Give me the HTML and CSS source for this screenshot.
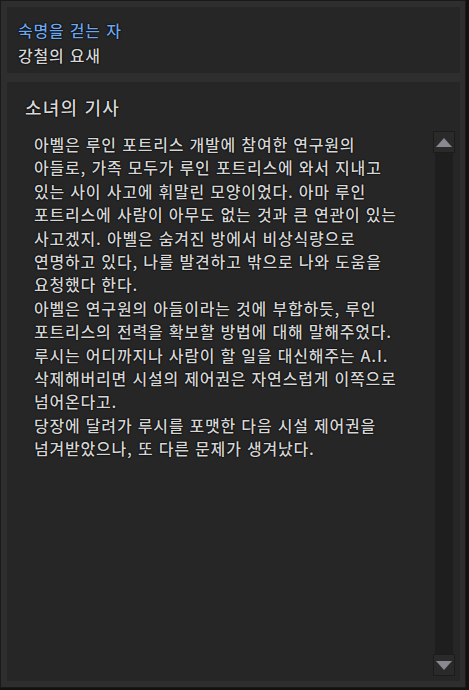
FILE: index.html
```html
<!DOCTYPE html>
<html lang="ko">

<head>
    <meta charset="UTF-8">
    <meta name="viewport" content="width=device-width, initial-scale=1.0">
    <title>소녀의 기사</title>
    <link rel="stylesheet" href="styles.css">
</head>

<body>
    <div class="frame">
        <!-- Quest header -->
        <div class="panel quest-header">
            <div class="quest-title">숙명을 걷는 자</div>
            <div class="quest-sub">강철의 요새</div>
        </div>

        <!-- Quest text -->
        <div class="panel quest-body">
            <h1 class="quest-name">소녀의 기사</h1>
            <div class="quest-content">
                <div class="quest-text">
                    아벨은 루인 포트리스 개발에 참여한 연구원의<br>
                    아들로, 가족 모두가 루인 포트리스에 와서 지내고<br>
                    있는 사이 사고에 휘말린 모양이었다. 아마 루인<br>
                    포트리스에 사람이 아무도 없는 것과 큰 연관이 있는<br>
                    사고겠지. 아벨은 숨겨진 방에서 비상식량으로<br>
                    연명하고 있다, 나를 발견하고 밖으로 나와 도움을<br>
                    요청했다 한다.<br>
                    아벨은 연구원의 아들이라는 것에 부합하듯, 루인<br>
                    포트리스의 전력을 확보할 방법에 대해 말해주었다.<br>
                    루시는 어디까지나 사람이 할 일을 대신해주는 A.I.<br>
                    삭제해버리면 시설의 제어권은 자연스럽게 이쪽으로<br>
                    넘어온다고.<br>
                    당장에 달려가 루시를 포맷한 다음 시설 제어권을<br>
                    넘겨받았으나, 또 다른 문제가 생겨났다.
                </div>
                <div class="scrollbar">
                    <div class="scroll-btn"><span class="arrow up"></span></div>
                    <div class="scroll-track"></div>
                    <div class="scroll-btn"><span class="arrow down"></span></div>
                </div>
            </div>
        </div>
    </div>
</body>

</html>
```
FILE: styles.css
```css
/* Page */
html,
body {
    margin: 0;
    padding: 0;
    height: 100%;
}

body {
    background-color: #111;
    font-family: "Noto Sans CJK KR", "Noto Sans", sans-serif;
}

/* Outer window frame */
.frame {
    box-sizing: border-box;
    width: 466px;
    height: 688px;
    background-color: #2e2e2e;
    border: 1px solid #1a1a1a;
    padding: 6px 5px 6px 6px;
    display: flex;
    flex-direction: column;
    gap: 9px;
}

.panel {
    background-color: #262626;
    text-shadow: 0 0 2px #000, 0 0 1px #000, 0 0 1px #000;
    font-weight: 500;
}

/* Header panel */
.quest-header {
    height: 66px;
    box-sizing: border-box;
    padding: 11px 11px 0;
}

.quest-title {
    color: #6ea6ea;
    font-size: 16px;
    letter-spacing: 0.8px;
    line-height: 25px;
}

.quest-sub {
    color: #d6d6d6;
    font-size: 16px;
    letter-spacing: 0.8px;
    line-height: 25px;
}

/* Body panel */
.quest-body {
    flex: 1;
    display: flex;
    flex-direction: column;
    padding: 11px 0 5px 18px;
}

.quest-name {
    margin: 0;
    color: #d8d8d8;
    font-size: 18px;
    font-weight: 500;
    letter-spacing: 1.2px;
    line-height: 28px;
}

.quest-content {
    flex: 1;
    display: flex;
    margin-top: 10px;
}

.quest-text {
    flex: 1;
    padding: 2px 0 0 9px;
    color: #d6d6d6;
    font-size: 16px;
    letter-spacing: 0.8px;
    line-height: 23.4px;
}

/* Scrollbar */
.scrollbar {
    width: 22px;
    margin-right: 5px;
    display: flex;
    flex-direction: column;
}

.scroll-btn {
    height: 22px;
    box-sizing: border-box;
    background-color: #2a2a2a;
    border: 1px solid #1c1c1c;
    display: flex;
    align-items: center;
    justify-content: center;
}

.scroll-track {
    flex: 1;
    margin: 0 2px;
    background-color: #1e1e1e;
}

.arrow {
    width: 0;
    height: 0;
    border-left: 8px solid transparent;
    border-right: 8px solid transparent;
}

.arrow.up {
    border-bottom: 9px solid #8a8890;
}

.arrow.down {
    border-top: 9px solid #8a8890;
}
```
